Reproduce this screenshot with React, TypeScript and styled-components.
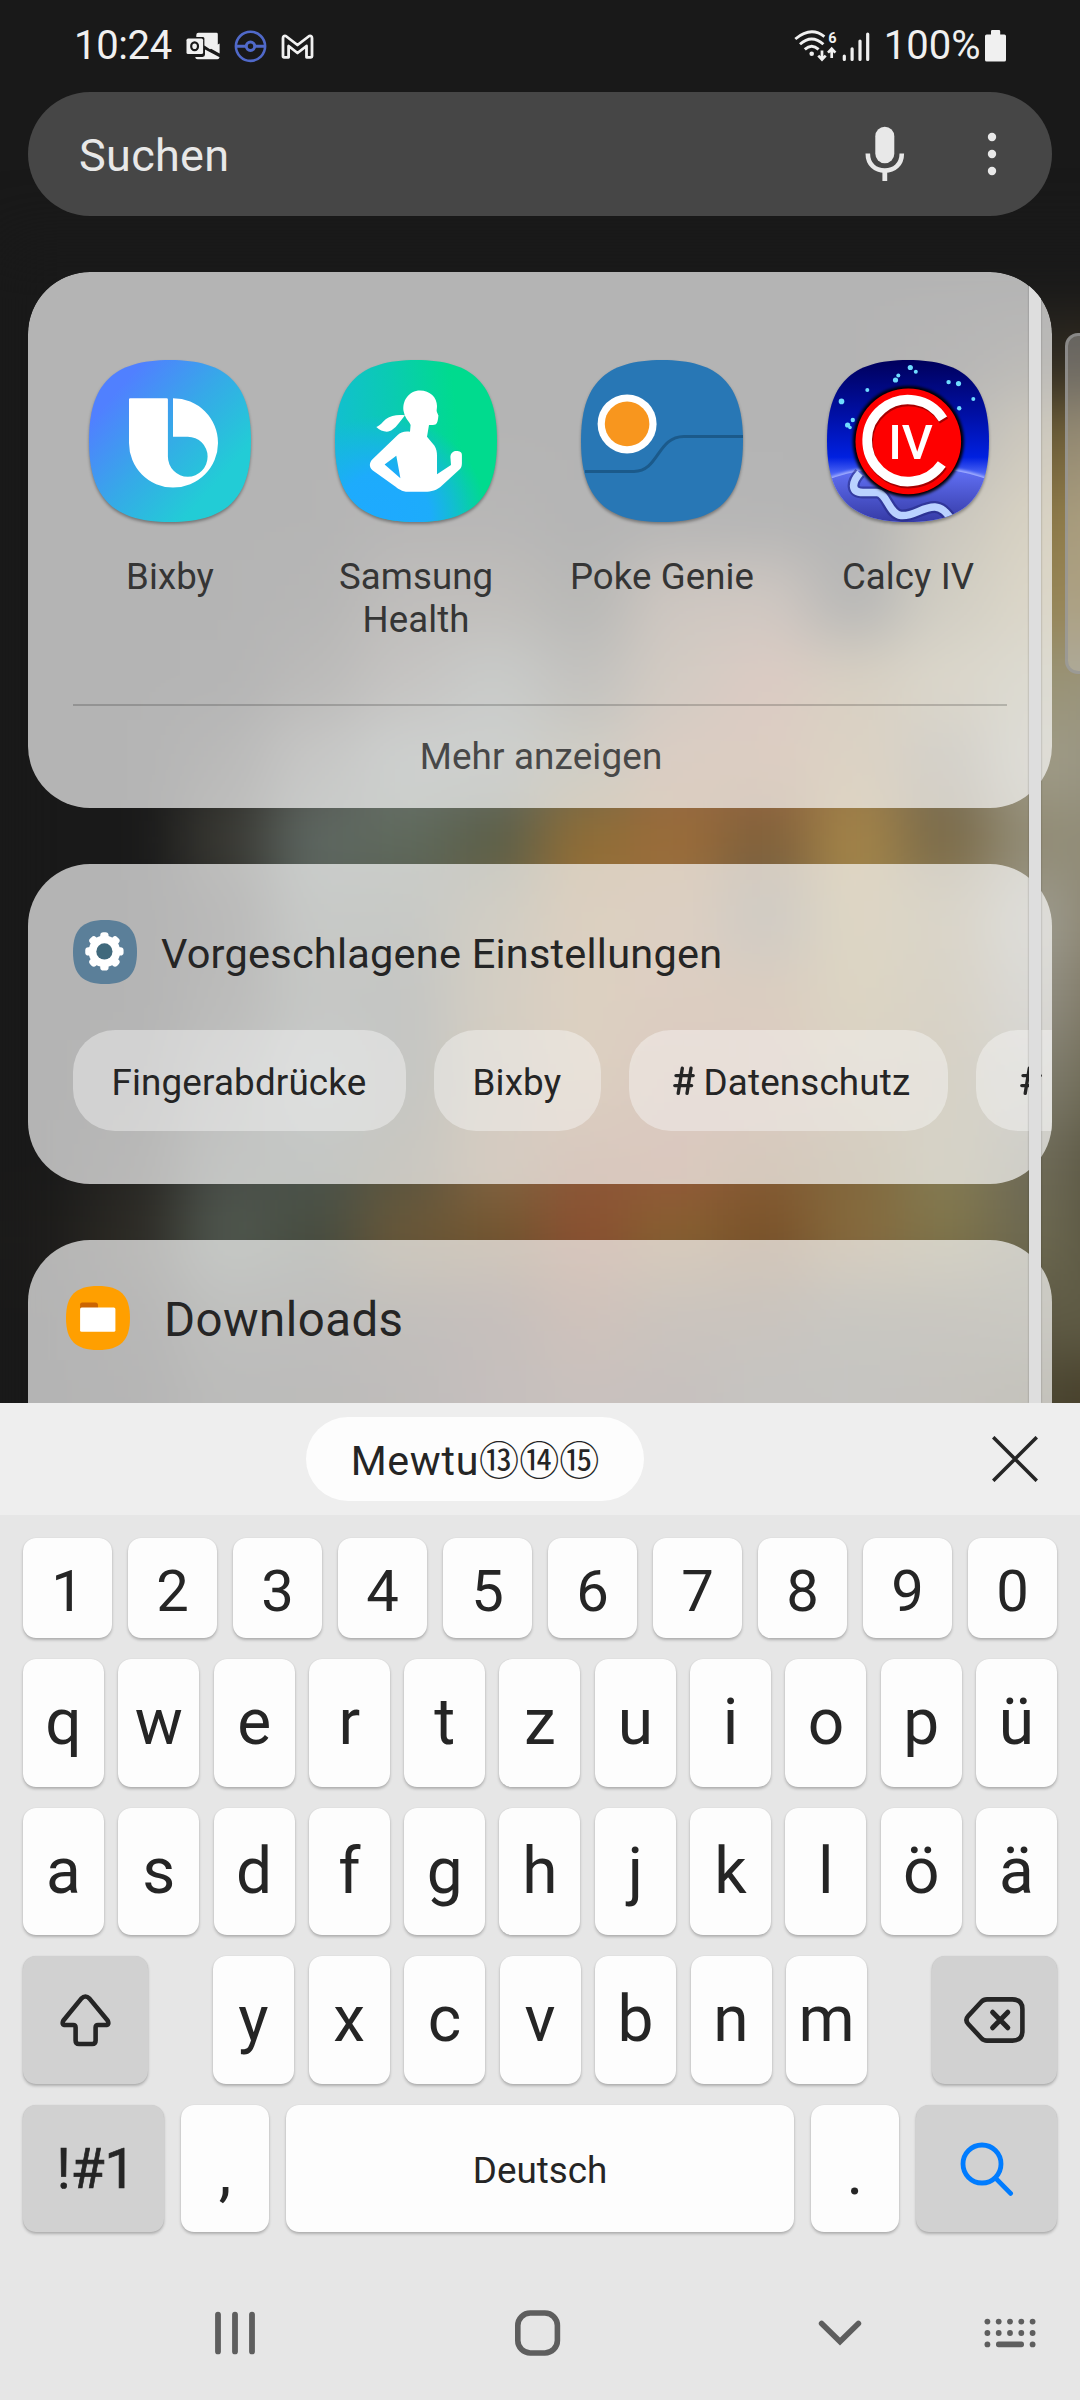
import React from "react";
import styled, { createGlobalStyle } from "styled-components";

const GlobalStyle = createGlobalStyle`
  html, body { margin: 0; padding: 0; background: #191919; }
  * { box-sizing: border-box; }
  svg { display: block; flex-shrink: 0; }
`;

const Screen = styled.div`
  position: relative;
  width: 1080px;
  height: 2400px;
  overflow: hidden;
  display: flex;
  flex-direction: column;
  background: #191919;
  font-family: Roboto, "Noto Sans CJK JP", sans-serif;
  color: #252525;
`;

/* ---------- wallpaper ---------- */

const WallpaperLayer = styled.svg`
  position: absolute;
  left: 0;
  top: 0;
`;

const CELL_W = 90;
const CELL_H = 80;
const CELL_TOP = 240;

const wallpaperRows: string[] = [
  "191919 191919 191919 191919 191919 191919 191919 191919 191919 191919 191919 191919 1a1a19",
  "191919 191919 191919 191919 191919 191919 191919 191919 191919 191919 211f1d 2e2a22 33291c",
  "191919 191919 191919 191919 191919 191919 191919 191919 191919 191919 302c26 6d5e38 7d6a42",
  "191919 191919 191919 191919 24211f 24211f 191919 201f1e 1c1c1c 191919 5f5438 8a7848 9a8450",
  "191919 191919 191919 1f1e1c 3c3630 40382e 26261f 6a5340 6f5744 22221f 756a48 958558 9c8550",
  "191919 191919 1a1a1a 2f2c28 4f4a44 5c625c 48443a 7a6248 96624a 8a7248 948660 989274 9c9680",
  "191919 191919 2b2a28 545450 6a726e 6a706a 706a50 946848 996845 97794a 7c725c a09c88 969280",
  "191919 191919 3a3a34 5e6862 5f6a5c 5a5e48 906d35 9a6c38 80603a a48448 7a6a48 928c76 908b78",
  "191919 191919 2a2927 565c55 565a50 75694a 97703e 9a7046 70624c 9d854c 8f805a 9e9c90 877f68",
  "191919 191919 30302c 50554e 4c5048 7f6c48 9a7244 9a6a44 94693f 988048 8c7a54 918e82 78705a",
  "191919 1c1c1b 3e403c 5a6460 4e5248 7a6440 97703f 935c3c 945f40 91744a 857550 7f7d6e 69634c",
  "191919 262522 484c47 4c544c 5a5540 836544 8c5838 93583a 855c35 80683e 857c54 6e6a58 55523d",
  "1e1d1b 2e2c26 50584f 474d40 6a5838 72552f 8a5030 86602f 7a5229 876a3c 7f744a 6c6850 55523e",
  "191919 222120 3a3c36 3a3834 443a30 503a30 6d442d 5f4a38 5c4a38 585444 5a5340 5e5a45 605c45",
  "191919 1c1b1a 30302c 33302b 3c332c 4f3a36 5a4238 544038 504c42 504c44 524a3a 4a4530 453c28",
  "191919 1c1b1a 30302c 33302b 3c332c 4f3a36 5a4238 544038 504c42 504c44 524a3a 4a4530 453c28",
];

const Wallpaper = () => (
  <WallpaperLayer width="1080" height="1420" viewBox="0 0 1080 1420">
    <defs>
      <filter id="soften" x="-10%" y="-10%" width="120%" height="120%" colorInterpolationFilters="sRGB">
        <feGaussianBlur stdDeviation="30" />
      </filter>
    </defs>
    <g filter="url(#soften)">
      {wallpaperRows.map((row, r) =>
        row.split(" ").map((c, i) => (
          <rect
            key={`${r}-${i}`}
            x={i * CELL_W}
            y={CELL_TOP + r * CELL_H}
            width={i === 12 ? 200 : CELL_W + 1}
            height={CELL_H + 1}
            fill={`#${c}`}
          />
        ))
      )}
    </g>
  </WallpaperLayer>
);

const EdgeHandle = styled.div`
  position: absolute;
  right: -12px;
  top: 333px;
  width: 27px;
  height: 341px;
  border: 3px solid rgba(150, 150, 150, 0.75);
  border-radius: 13px;
  background: rgba(205, 205, 205, 0.38);
`;

/* ---------- status bar ---------- */

const StatusBar = styled.header`
  position: relative;
  height: 92px;
  flex: none;
  display: flex;
  align-items: center;
  padding: 0 74px 0 74px;
  color: #f0f0f0;
  font-size: 40px;
  line-height: 48px;
`;

const Clock = styled.span`
  width: 112px;
  white-space: nowrap;
  letter-spacing: -0.35px;
`;

const NotificationIcons = styled.div`
  display: flex;
  align-items: center;
  gap: 14px;
  flex: 1;
`;

const Connectivity = styled.div`
  display: flex;
  align-items: center;
`;

const BatteryText = styled.span`
  margin: 0 4.5px 0 13.5px;
  white-space: nowrap;
`;

const WifiSvg = styled.svg`
  margin-right: 2.5px;
`;

const OutlookIcon = () => (
  <svg width="34" height="28" viewBox="0 0 34 28">
    <path d="M12.5 0.8H30.5Q31.8 .8 31.8 2.2V14L24 17.2L18.4 13.6V6.5Q18.4 5 17 5H10.3V3Q10.3 .8 12.5 .8Z" fill="#f0f0f0" />
    <path d="M33.6 11.4V21.6L24.6 16.5Z" fill="#f0f0f0" />
    <path d="M19 17.6L33.6 25.3Q33 27.2 31.4 27.2H11.6Q9.4 27.2 9.2 25H16.5Q19 25 19 22.6Z" fill="#f0f0f0" />
    <rect x="0.5" y="6.6" width="16.6" height="15.4" rx="1.6" fill="#f0f0f0" />
    <ellipse cx="8.6" cy="14.3" rx="3.4" ry="3.9" fill="none" stroke="#191919" strokeWidth="2.2" />
  </svg>
);

const BallIcon = () => (
  <svg width="33" height="33" viewBox="0 0 33 33" fill="none" stroke="#5069c9" strokeWidth="2.6">
    <circle cx="16.5" cy="16.3" r="14.6" />
    <circle cx="16.5" cy="16.3" r="4.2" strokeWidth="3" />
    <path d="M2 16.3H12M21 16.3H31" strokeWidth="3" />
  </svg>
);

const GmailIcon = () => (
  <svg width="33" height="25" viewBox="0 0 33 25" fill="none" stroke="#f0f0f0" strokeWidth="2.8" strokeLinejoin="round">
    <path d="M2 22.3V4.2Q2 1.4 4.8 2L16.5 11L28.2 2Q31 1.4 31 4.2V22.3Q31 23.3 30 23.3H25.5V12L16.5 19L7.6 12V23.3H3Q2 23.3 2 22.3Z" />
  </svg>
);

const WifiIcon = () => (
  <WifiSvg width="45" height="34" viewBox="0 0 45 34" fill="none" stroke="#f0f0f0" strokeWidth="2.9">
    <path d="M2.3 10Q18 -3 31.4 7.6" />
    <path d="M7 15.2Q18.7 4.6 30.4 15.2" />
    <path d="M11.8 20.4Q18.7 14 25.6 20.4" />
    <circle cx="18.7" cy="24.7" r="2.3" fill="#f0f0f0" stroke="none" />
    <path d="M29 21.5V30M25.3 26.6L29 30.6L32.7 26.6" strokeWidth="2.7" />
    <path d="M38.7 29V20M35 23.6L38.7 19.8L42.4 23.6" strokeWidth="2.7" />
    <text x="39.3" y="13.6" textAnchor="middle" fontFamily="Roboto" fontWeight="700" fontSize="14.5" fill="#f0f0f0" stroke="none">6</text>
  </WifiSvg>
);

const SignalIcon = () => (
  <svg width="30" height="34" viewBox="0 0 30 34" stroke="#f0f0f0" strokeWidth="3.2" strokeLinecap="round">
    <path d="M4.3 30.4V27M12.1 30.4V19.8M20 30.4V12M27.7 30.4V5" />
  </svg>
);

const BatteryIcon = () => (
  <svg width="21" height="34" viewBox="0 0 21 34" fill="#f0f0f0">
    <path d="M6 2.2Q6 1 7.2 1H14Q15.2 1 15.2 2.2V5.4H19.3Q21 5.4 21 7V31Q21 32.6 19.3 32.6H1.7Q0 32.6 0 31V7Q0 5.4 1.7 5.4H6Z" />
  </svg>
);

/* ---------- search field ---------- */

const SearchBar = styled.div`
  position: relative;
  flex: none;
  height: 124px;
  margin: 0 28px;
  padding: 0 55.5px 0 51px;
  border-radius: 62px;
  background: #464646;
  display: flex;
  align-items: center;
`;

const SearchHint = styled.span`
  flex: 1;
  padding-top: 3px;
  font-size: 45px;
  line-height: 54px;
  letter-spacing: 0.3px;
  color: #e8e8e8;
`;

const SearchActions = styled.div`
  display: flex;
  align-items: center;
  gap: 82px;
`;

const MicIcon = () => (
  <svg width="40" height="56" viewBox="0 0 40 56">
    <rect x="10.3" y="0.7" width="19" height="36.5" rx="9.5" fill="#e8e8e8" />
    <path d="M2.8 27.5C2.8 38.5 10.2 44.6 19.8 44.6S36.8 38.5 36.8 27.5" fill="none" stroke="#e8e8e8" strokeWidth="4.6" />
    <rect x="17.4" y="44" width="4.8" height="11" fill="#e8e8e8" />
  </svg>
);

const MoreIcon = () => (
  <svg width="10" height="44" viewBox="0 0 10 44" fill="#e8e8e8">
    <circle cx="5" cy="5" r="4.2" />
    <circle cx="5" cy="22" r="4.2" />
    <circle cx="5" cy="39" r="4.2" />
  </svg>
);

/* ---------- result cards ---------- */

const Results = styled.main`
  position: relative;
  flex: none;
  height: 1131px;
  margin: 56px 28px 0;
  border-radius: 62px 62px 0 0;
  overflow: hidden;
  display: flex;
  flex-direction: column;
  gap: 56px;
`;

const Card = styled.section<{ $height: number }>`
  flex: none;
  height: ${(p) => p.$height}px;
  border-radius: 62px;
  background: rgba(251, 251, 251, 0.69);
  overflow: hidden;
`;

const ScrollThumb = styled.div`
  position: absolute;
  top: 0;
  bottom: 0;
  right: 11px;
  width: 12px;
  background: #dedede;
  box-shadow: 0 0 2px rgba(0, 0, 0, 0.3);
`;

const AppGrid = styled.div`
  display: grid;
  grid-template-columns: repeat(4, 246px);
  padding: 88px 0 0 19px;
  height: 432px;
`;

const AppItem = styled.div`
  display: flex;
  flex-direction: column;
  align-items: center;
  gap: 33px;
`;

const AppLabel = styled.span`
  width: 210px;
  text-align: center;
  font-size: 36.6px;
  line-height: 43px;
  letter-spacing: 0.1px;
  color: #353535;
`;

const AppIcon = styled.svg`
  overflow: visible;
  filter: drop-shadow(0 2px 1.5px rgba(0, 0, 0, 0.35));
`;

const ShowMore = styled.div`
  margin: 0 45px;
  height: 104px;
  border-top: 2px solid rgba(0, 0, 0, 0.18);
  display: flex;
  align-items: center;
  justify-content: center;
  padding-left: 2px;
  font-size: 36.8px;
  line-height: 44px;
  letter-spacing: 0.15px;
  color: #484848;
`;

const SQUIRCLE = "M0 81C0 24 24 0 81 0S162 24 162 81 138 162 81 162 0 138 0 81Z";

const BixbyIcon = () => (
  <AppIcon width="162" height="162" viewBox="0 0 162 162">
    <defs>
      <linearGradient id="bixby" x1="0.12" y1="0.25" x2="0.75" y2="0.8">
        <stop offset="0" stopColor="#5080ff" />
        <stop offset="0.5" stopColor="#36a9e8" />
        <stop offset="1" stopColor="#22ccd6" />
      </linearGradient>
    </defs>
    <path d={SQUIRCLE} fill="url(#bixby)" />
    <path
      d="M40 39.4Q40 38.2 41.2 38.2H77.6Q78.9 38.2 78.9 39.4V96.4A20 20.3 0 0 0 98.8 116.8A20 20.3 0 0 0 118.6 96.4A20 19.6 0 0 0 98.8 76.8H84V38.2A45 44.7 0 0 1 84 127.6A44 44.7 0 0 1 40 82.9Z"
      fill="#fff"
    />
  </AppIcon>
);

const HealthIcon = () => (
  <AppIcon width="162" height="162" viewBox="0 0 162 162">
    <defs>
      <linearGradient id="health" x1="0" y1="0.4" x2="0.75" y2="0.3">
        <stop offset="0" stopColor="#12bfd0" />
        <stop offset="0.5" stopColor="#0acbb2" />
        <stop offset="1" stopColor="#00db8e" />
      </linearGradient>
      <radialGradient id="healthBlue" cx="0.3" cy="0.98" r="0.64">
        <stop offset="0" stopColor="#1eaaff" />
        <stop offset="0.45" stopColor="#1eaaff" stopOpacity="0.95" />
        <stop offset="1" stopColor="#1eaaff" stopOpacity="0" />
      </radialGradient>
    </defs>
    <path d={SQUIRCLE} fill="url(#health)" />
    <path d={SQUIRCLE} fill="url(#healthBlue)" />
    <path
      fill="#fff"
      fillRule="evenodd"
      d="M85 30.5C95 30.5 102 37.5 102 46C102 49 101.3 50.5 101.9 52L103.4 55.4C103 60 102.5 63 100.5 64.6C98 65.5 96 64.6 94 65L92 76.8L99.5 85.7C101.5 89 102 92 102 96V114.3L116 105L115.4 97C115.5 93.5 118 91 121 91C125 91 126.9 92 126.9 95V103.6C126.8 106 126.3 108 125 109L107 125.5C102 130.5 96 131.8 90.2 131.8H73C67 131.8 63 128.5 59.2 125.7L37.5 110.2C34 107.5 34 102.5 37.5 99.3L62.7 75C65.5 72.5 69.6 70.8 75 71.8L75.6 65C74 61 70.5 59 68.8 52C66.5 41 74 30.5 85 30.5ZM61.3 95.7L49.6 104.6L65.4 118.2Z"
    />
    <path fill="#fff" d="M70 55.3C62 54.5 56 55.5 51 59C48 61.5 46 65 41.3 67C46 71.5 53 73.5 57.5 69.6C62 66.5 65 61.5 70 55.3Z" />
  </AppIcon>
);

const PokeGenieIcon = () => (
  <AppIcon width="162" height="162" viewBox="0 0 162 162">
    <path d={SQUIRCLE} fill="#2877b5" />
    <path d="M4 111.4H53C78 111.4 76 76.4 103 76.4H162" fill="none" stroke="#1b5a8b" strokeWidth="3" />
    <circle cx="46.1" cy="63.9" r="29.5" fill="#fff" />
    <circle cx="46.1" cy="63.9" r="22.3" fill="#f8961e" />
  </AppIcon>
);

const stars = [
  [83.3, 7.5, 2.6], [88.8, 11.8, 2], [71.3, 15.4, 2], [68.5, 20, 2.6], [40.3, 30, 2], [14.5, 41.4, 2.8],
  [121.6, 22.1, 2.2], [131.5, 23.6, 2.6], [146.3, 38.9, 2], [132.2, 48.2, 2.2], [25.8, 60, 2.2], [20.6, 65, 2.6], [23, 67.5, 1.8],
];

const CalcyIcon = () => (
  <AppIcon width="162" height="162" viewBox="0 0 162 162">
    <defs>
      <clipPath id="calcyShape"><path d={SQUIRCLE} /></clipPath>
      <linearGradient id="sky" x1="0" y1="0" x2="0" y2="1">
        <stop offset="0" stopColor="#00005c" />
        <stop offset="0.35" stopColor="#0010a8" />
        <stop offset="0.6" stopColor="#0020e0" />
        <stop offset="0.7" stopColor="#4a63f4" />
      </linearGradient>
      <linearGradient id="ground" x1="0" y1="106" x2="0" y2="162" gradientUnits="userSpaceOnUse">
        <stop offset="0" stopColor="#6474fb" />
        <stop offset="1" stopColor="#363ba6" />
      </linearGradient>
      <filter id="glow" x="-20%" y="-20%" width="140%" height="140%"><feGaussianBlur stdDeviation="1.6" /></filter>
    </defs>
    <g clipPath="url(#calcyShape)">
      <rect width="162" height="162" fill="url(#sky)" />
      <ellipse cx="81" cy="206" rx="160" ry="102" fill="#a9b4ff" filter="url(#glow)" />
      <ellipse cx="81" cy="208" rx="160" ry="102" fill="url(#ground)" />
      {stars.map(([x, y, r], i) => <circle key={i} cx={x} cy={y} r={r} fill="#6fdcff" />)}
      <g fill="none" strokeLinejoin="round">
        <path d="M33 113C24 123 24 132.5 36 132.5H50C60 133 62 154.5 74 155.5C86 157 96 146.5 108 147C116 147.5 120 154 126 161" stroke="#20267c" strokeWidth="12" opacity="0.55" />
        <path d="M33 113C24 123 24 132.5 36 132.5H50C60 133 62 154.5 74 155.5C86 157 96 146.5 108 147C116 147.5 120 154 126 161" stroke="#bad2ff" strokeWidth="7.5" />
      </g>
      <circle cx="81.3" cy="81.4" r="55.5" filter="url(#glow)" />
      <circle cx="81.3" cy="81.4" r="52.8" fill="#fe0000" />
      <path d="M116 59A41 41 0 1 0 114.8 104" fill="none" stroke="#000" strokeWidth="9.6" opacity="0.35" transform="translate(1 2)" />
      <path d="M116 59A41 41 0 1 0 114.8 104" fill="none" stroke="#fff" strokeWidth="9.6" />
      <text x="83.5" y="99.3" textAnchor="middle" fontFamily="Roboto" fontWeight="500" fontSize="48" fill="#fff">IV</text>
    </g>
  </AppIcon>
);

const apps = [
  { name: "Bixby", Icon: BixbyIcon },
  { name: "Samsung Health", Icon: HealthIcon },
  { name: "Poke Genie", Icon: PokeGenieIcon },
  { name: "Calcy IV", Icon: CalcyIcon },
];

const CardHeader = styled.div<{ $top: number; $left: number; $gap: number; $size: number; $tracking: number }>`
  display: flex;
  align-items: center;
  gap: ${(p) => p.$gap}px;
  padding: ${(p) => p.$top}px 0 0 ${(p) => p.$left}px;
  font-size: ${(p) => p.$size}px;
  letter-spacing: ${(p) => p.$tracking}px;
  line-height: 56px;
`;

const CardTitle = styled.h2<{ $drop: number }>`
  margin: 0;
  padding-top: ${(p) => p.$drop}px;
  font-size: inherit;
  font-weight: 400;
  white-space: nowrap;
`;

const ChipRow = styled.div`
  display: flex;
  gap: 28px;
  padding: 46px 0 0 45px;
`;

const Chip = styled.div<{ $width: number }>`
  flex: none;
  width: ${(p) => p.$width}px;
  height: 101px;
  border-radius: 42px;
  padding: 4px 0 0 38.5px;
  background: rgba(251, 251, 251, 0.42);
  display: flex;
  align-items: center;
  gap: 9px;
  font-size: 36.8px;
  line-height: 44px;
  letter-spacing: 0.15px;
  white-space: nowrap;
`;

const SettingsIcon = () => (
  <svg width="64" height="64" viewBox="0 0 162 162">
    <path d={SQUIRCLE} fill="#5b7f99" />
    <g transform="translate(79.5 79.5)" fill="#fff">
      <circle r="40" />
      {[0, 45, 90, 135].map((a) => (
        <rect key={a} x="-10.5" y="-48.5" width="21" height="97" rx="8" transform={`rotate(${a})`} />
      ))}
      <circle r="20.5" fill="#40697c" />
    </g>
  </svg>
);

const FolderIcon = () => (
  <svg width="64" height="64" viewBox="0 0 64 64">
    <path d={SQUIRCLE} fill="#ff9f00" transform="scale(0.395)" />
    <path d="M14.1 24V18.4Q14.1 16.4 16.1 16.4H29.5Q31.7 16.4 31.9 18.6L32.3 24Z" fill="#cb6402" />
    <rect x="14.1" y="21.4" width="35.3" height="24.4" rx="1.6" fill="#fff" />
  </svg>
);

const HashIcon = () => (
  <svg width="22" height="30" viewBox="0 0 22 30" fill="none" stroke="#252525" strokeWidth="3.4" strokeLinecap="round">
    <path d="M9.3 2.2L5.2 27.4M18 2.2L14 27.4M3 9.6H20.2M1.8 19.6H18.6" />
  </svg>
);

const HashSlot = styled.span`
  display: flex;
  padding: 0 0 4px 5px;
`;

/* ---------- keyboard ---------- */

const SuggestionBar = styled.div`
  position: relative;
  flex: none;
  height: 112px;
  background: #eeeeee;
  display: flex;
  align-items: center;
  justify-content: space-between;
  padding: 0 42px 0 306px;
`;

const Suggestion = styled.div`
  width: 338px;
  height: 84px;
  border-radius: 42px;
  background: #fdfdfd;
  display: flex;
  align-items: baseline;
  justify-content: center;
  padding-top: 20px;
  font-size: 41.2px;
  line-height: 48px;
  letter-spacing: 0.7px;
  white-space: nowrap;
`;

const CircledDigits = styled.span`
  font-size: 40.1px;
  letter-spacing: 0;
`;

const CloseIcon = () => (
  <svg width="46" height="46" viewBox="0 0 46 46" stroke="#252525" strokeWidth="3.6" fill="none">
    <path d="M1.2 1.2L44.8 44.8M44.8 1.2L1.2 44.8" />
  </svg>
);

const Keyboard = styled.div`
  position: relative;
  flex: 1;
  background: #e6e6e6;
  padding: 23px 23px 0;
  display: flex;
  flex-direction: column;
  gap: 21px;
`;

const KeyRow = styled.div<{ $gap: number; $height: number }>`
  flex: none;
  height: ${(p) => p.$height}px;
  display: flex;
  justify-content: space-between;
  gap: ${(p) => p.$gap}px;
`;

const Key = styled.div<{ $width?: number; $dark?: boolean; $size?: number; $drop?: number }>`
  flex: ${(p) => (p.$width ? `0 0 ${p.$width}px` : "1 1 0")};
  min-width: 0;
  display: flex;
  align-items: center;
  justify-content: center;
  border-radius: 13px;
  background: ${(p) => (p.$dark ? "#d1d1d1" : "#fdfdfd")};
  box-shadow: 0 2px 3px rgba(0, 0, 0, 0.24), 0 0 1px rgba(0, 0, 0, 0.12);
  font-size: ${(p) => p.$size ?? 64}px;
  line-height: 1;
  padding-top: ${(p) => (p.$drop ?? 0) * 2}px;
`;

const SymbolLabel = styled.span`
  padding-left: 5px;
  -webkit-text-stroke: 0.7px #252525;
`;

const LetterGroup = styled.div`
  width: 654px;
  display: flex;
  justify-content: space-between;
`;

const ShiftIcon = () => (
  <svg width="51" height="53" viewBox="0 0 51 53" fill="none" stroke="#252525" strokeWidth="4.6" strokeLinejoin="round">
    <path d="M21.3 4.6Q25.4 .4 29.5 4.6L47.4 26.2Q50 31 45.4 31H38Q35.6 31 35.6 33.4V46.5Q35.6 50 32.2 50H19Q15.6 50 15.6 46.5V33.4Q15.6 31 13.2 31H5.6Q1 31 3.6 26.2Z" />
  </svg>
);

const BackspaceIcon = () => (
  <svg width="61" height="46" viewBox="0 0 61 46" fill="none" stroke="#252525" strokeWidth="4.6" strokeLinejoin="round" strokeLinecap="round">
    <path d="M23 2.4H48.5Q58.4 2.4 58.4 12V34Q58.4 43.6 48.5 43.6H23Q19.6 43.6 17.4 41.2L4.2 27Q.6 23 4.2 19L17.4 4.8Q19.6 2.4 23 2.4Z" />
    <path d="M28.6 15.2L43.8 30.8M43.8 15.2L28.6 30.8" strokeWidth="5" />
  </svg>
);

const SearchIcon = () => (
  <svg width="54" height="54" viewBox="0 0 54 54" fill="none" stroke="#007cff" strokeWidth="4.8" strokeLinecap="round">
    <circle cx="22" cy="22" r="19" />
    <path d="M35.8 36.4L50.6 51.4" />
  </svg>
);

const Letters = ({ chars }: { chars: string }) => (
  <>
    {chars.split("").map((c) => (
      <Key key={c}>{c}</Key>
    ))}
  </>
);

/* ---------- navigation bar ---------- */

const NavBar = styled.nav`
  height: 134px;
  margin: 13px -23px 0;
  padding-left: 84px;
  display: flex;
  align-items: center;
`;

const NavSlot = styled.div<{ $width: number }>`
  width: ${(p) => p.$width}px;
  display: flex;
  justify-content: center;
`;

const RecentsIcon = () => (
  <svg width="42" height="44" viewBox="0 0 42 44" stroke="#5e5e5e" strokeWidth="5.8" strokeLinecap="round">
    <path d="M4 3.6V40.4M21 3.6V40.4M38 3.6V40.4" />
  </svg>
);

const HomeIcon = () => (
  <svg width="46" height="46" viewBox="0 0 46 46" fill="none" stroke="#5e5e5e" strokeWidth="5.6">
    <rect x="2.8" y="3" width="39.6" height="40" rx="12.5" />
  </svg>
);

const ChevronIcon = () => (
  <svg width="44" height="28" viewBox="0 0 44 28" fill="none" stroke="#5e5e5e" strokeWidth="5.6" strokeLinecap="round">
    <path d="M3.6 4.4L22 22.6L40.4 4.4" />
  </svg>
);

const KeyboardIcon = () => (
  <svg width="52" height="30" viewBox="0 0 52 30" fill="#5e5e5e">
    {[0, 1].map((r) =>
      [0, 1, 2, 3, 4].map((c) => <circle key={`${r}${c}`} cx={3.4 + c * 11.3} cy={3.6 + r * 11.4} r="2.9" />)
    )}
    <circle cx="3.4" cy="26.4" r="2.9" />
    <circle cx="48.6" cy="26.4" r="2.9" />
    <rect x="12" y="23.6" width="28" height="5.6" rx="2.6" />
  </svg>
);

export default function App() {
  return (
    <Screen>
      <GlobalStyle />
      <Wallpaper />
      <EdgeHandle />

      <StatusBar>
        <Clock>10:24</Clock>
        <NotificationIcons>
          <OutlookIcon />
          <BallIcon />
          <GmailIcon />
        </NotificationIcons>
        <Connectivity>
          <WifiIcon />
          <SignalIcon />
          <BatteryText>100%</BatteryText>
          <BatteryIcon />
        </Connectivity>
      </StatusBar>

      <SearchBar>
        <SearchHint>Suchen</SearchHint>
        <SearchActions>
          <MicIcon />
          <MoreIcon />
        </SearchActions>
      </SearchBar>

      <Results>
        <Card $height={536}>
          <AppGrid>
            {apps.map(({ name, Icon }) => (
              <AppItem key={name}>
                <Icon />
                <AppLabel>{name}</AppLabel>
              </AppItem>
            ))}
          </AppGrid>
          <ShowMore>Mehr anzeigen</ShowMore>
        </Card>

        <Card $height={320}>
          <CardHeader $top={56} $left={45} $gap={24} $size={41.5} $tracking={0.22}>
            <SettingsIcon />
            <CardTitle $drop={4}>Vorgeschlagene Einstellungen</CardTitle>
          </CardHeader>
          <ChipRow>
            <Chip $width={333}>Fingerabdrücke</Chip>
            <Chip $width={167}>Bixby</Chip>
            <Chip $width={319}>
              <HashSlot><HashIcon /></HashSlot>
              Datenschutz
            </Chip>
            <Chip $width={319}>
              <HashSlot><HashIcon /></HashSlot>
            </Chip>
          </ChipRow>
        </Card>

        <Card $height={320}>
          <CardHeader $top={46} $left={38} $gap={34} $size={47.4} $tracking={0.45}>
            <FolderIcon />
            <CardTitle $drop={4}>Downloads</CardTitle>
          </CardHeader>
        </Card>
        <ScrollThumb />
      </Results>

      <SuggestionBar>
        <Suggestion>Mewtu<CircledDigits>⑬⑭⑮</CircledDigits></Suggestion>
        <CloseIcon />
      </SuggestionBar>

      <Keyboard>
        <KeyRow $gap={16} $height={100}>
          {"1234567890".split("").map((d) => (
            <Key key={d} $size={58} $drop={3}>{d}</Key>
          ))}
        </KeyRow>
        <KeyRow $gap={14.3} $height={128}>
          <Letters chars="qwertzuiopü" />
        </KeyRow>
        <KeyRow $gap={14.3} $height={127}>
          <Letters chars="asdfghjklöä" />
        </KeyRow>
        <KeyRow $gap={0} $height={128}>
          <Key $width={125} $dark><ShiftIcon /></Key>
          <LetterGroup>
            {"yxcvbnm".split("").map((c) => (
              <Key key={c} $width={81}>{c}</Key>
            ))}
          </LetterGroup>
          <Key $width={125} $dark><BackspaceIcon /></Key>
        </KeyRow>
        <KeyRow $gap={17} $height={127}>
          <Key $width={141} $dark $size={55} $drop={1}><SymbolLabel>!#1</SymbolLabel></Key>
          <Key $width={88} $drop={4}>,</Key>
          <Key $size={36.8} $drop={3}>Deutsch</Key>
          <Key $width={88} $drop={4}>.</Key>
          <Key $width={141} $dark><SearchIcon /></Key>
        </KeyRow>

        <NavBar>
          <NavSlot $width={302.5}><RecentsIcon /></NavSlot>
          <NavSlot $width={302.5}><HomeIcon /></NavSlot>
          <NavSlot $width={302.5}><ChevronIcon /></NavSlot>
          <NavSlot $width={37}><KeyboardIcon /></NavSlot>
        </NavBar>
      </Keyboard>
    </Screen>
  );
}
